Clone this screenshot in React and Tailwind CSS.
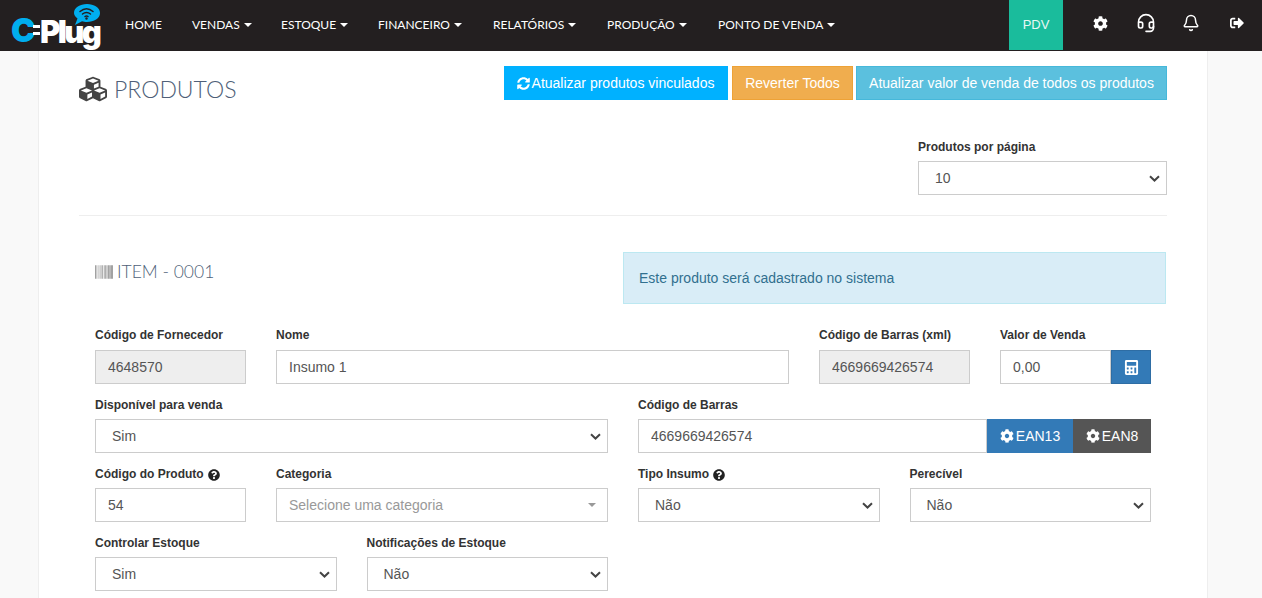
import React from "react";
import { FaCog, FaCubes, FaBarcode, FaSyncAlt, FaCalculator, FaQuestionCircle, FaSignOutAlt } from "react-icons/fa";
import { Bell, Headset } from "lucide-react";

const navItems = [
  ["HOME", false, "w-[67px]"],
  ["VENDAS", true, "w-[89px]"],
  ["ESTOQUE", true, "w-[97px]"],
  ["FINANCEIRO", true, "w-[115px]"],
  ["RELATÓRIOS", true, "w-[114px]"],
  ["PRODUÇÃO", true, "w-[111px]"],
  ["PONTO DE VENDA", true, "w-[130px]"],
];

function Label({ children, help, tall }) {
  return (
    <div className={`h-[15px] ${tall ? "mb-[7px]" : "mb-[6px]"} flex items-center gap-[4px] text-[12px] font-bold leading-[15px] text-[#333]`}>
      <span>{children}</span>
      {help && <FaQuestionCircle className="text-[12px] text-[#222]" />}
    </div>
  );
}

function Input({ value, disabled, className = "" }) {
  return (
    <input
      readOnly
      value={value}
      className={`block w-full h-[34px] px-3 border border-[#ccc] text-[14px] outline-none ${
        disabled ? "bg-[#eee] text-[#555]" : "bg-white text-[#555]"
      } ${className}`}
    />
  );
}

function Select({ value }) {
  return (
    <div className="relative">
      <select
        defaultValue={value}
        className="appearance-none block w-full h-[34px] pl-4 pr-6 border border-[#ccc] bg-white text-[14px] text-[#555] outline-none"
      >
        <option>{value}</option>
      </select>
      <svg className="absolute right-[7px] top-[14px] pointer-events-none" width="11" height="7" viewBox="0 0 11 7">
        <path d="M1 1.200l4.500 4.300 4.500-4.300" fill="none" stroke="#444" strokeWidth="2" />
      </svg>
    </div>
  );
}

function Caret({ color = "currentColor" }) {
  return (
    <svg width="8" height="4" viewBox="0 0 8 4" className="shrink-0">
      <path d="M0 0h8L4 4z" fill={color} />
    </svg>
  );
}

function Logo() {
  return (
    <div className="relative w-[100px] h-[50px] ml-[11px] shrink-0">
      <span className="absolute left-0 top-[14px] text-[33px] leading-[33px] font-black text-[#00aeef] font-['Inter',sans-serif]">
        C
      </span>
      <span className="absolute left-[22px] top-[25px] w-[7px] h-[3px] bg-white" />
      <span className="absolute left-[22px] top-[32px] w-[7px] h-[3px] bg-white" />
      <span className="absolute left-[29px] top-[16px] text-[31px] leading-[31px] font-black text-white font-['Inter',sans-serif] tracking-[-2.600px]">
        Plug
      </span>
      <svg className="absolute left-[61px] top-[3px]" width="29" height="23" viewBox="0 0 29 23">
        <path d="M15 1c7 0 13 3.600 13 9s-6 9-13 9c-2 0-3.500-.3-5-.8L3 22l2.500-6.500C3.500 14 2 12.300 2 10 2 4.600 8 1 15 1z" fill="#00aeef" />
        <path d="M8 8.500c4-3.500 9-3.500 13 0M10.500 11c2.500-2 5.500-2 8 0M13 13.500c1-.8 2-.8 3 0" fill="none" stroke="#231f20" strokeWidth="1.500" strokeLinecap="round" />
        <circle cx="14.500" cy="15.500" r="1.200" fill="#231f20" />
      </svg>
    </div>
  );
}

function Nav() {
  return (
    <nav className="flex h-[51px] bg-[#231f20] text-white shrink-0">
      <Logo />
      <div className="flex items-center h-[50px] ml-[14px] font-['Lato',sans-serif] text-[12px]">
        {navItems.map(([label, caret, w]) => (
          <div key={label} className={`flex items-center gap-[4px] ${w} whitespace-nowrap`}>
            <span>{label}</span>
            {caret && <Caret />}
          </div>
        ))}
      </div>
      <div className="ml-auto flex items-start">
        <div className="w-[54px] h-[50px] bg-[#1abc9c] flex items-center justify-center text-[13px] text-[#e8f8f5]">
          PDV
        </div>
        <div className="flex items-center h-[46px] w-[199px] pl-[15px]">
          <div className="w-[45px] flex justify-center"><FaCog className="text-[15px]" /></div>
          <div className="w-[45px] flex justify-center"><Headset size={20} strokeWidth={2} /></div>
          <div className="w-[46px] flex justify-center"><Bell size={18} strokeWidth={2} /></div>
          <div className="w-[45px] flex justify-center"><FaSignOutAlt className="text-[14px]" /></div>
        </div>
      </div>
    </nav>
  );
}

export default function App() {
  return (
    <div className="h-screen overflow-hidden flex flex-col bg-[#f9f9f9] font-['Liberation_Sans',Arial,sans-serif]">
      <Nav />
      <main className="ml-[38px] mr-[54px] flex-1 bg-white border-x border-[#eee] px-[40px]">
        <header className="flex items-start justify-between pt-[15px]">
          <h1 className="flex items-center gap-[7px] h-[46px] font-['Lato',sans-serif] font-light text-[23px] text-[#4f5f78]">
            <FaCubes className="text-[28px] text-[#444]" />
            <span>PRODUTOS</span>
          </h1>
          <div className="flex text-[14px] text-white">
            <div className="h-[34px] w-[224px] mr-[4px] pr-[1px] bg-[#00b1ff] flex items-center justify-center gap-[2px]">
              <FaSyncAlt className="text-[13px]" /> Atualizar produtos vinculados
            </div>
            <div className="h-[34px] w-[121px] mr-[3px] bg-[#f0ad4e] border border-[#eea236] flex items-center justify-center">
              Reverter Todos
            </div>
            <div className="h-[34px] w-[311px] bg-[#5bc0de] border border-[#46b8da] flex items-center justify-center">
              Atualizar valor de venda de todos os produtos
            </div>
          </div>
        </header>

        <div className="flex justify-end mt-[28px] pb-[20px] border-b border-[#eee]">
          <div className="w-[249px]">
            <Label>Produtos por página</Label>
            <Select value="10" />
          </div>
        </div>

        <section className="px-[16px] pt-[36px]">
          <div className="flex justify-between h-[76px]">
            <div className="flex items-center gap-[4px] h-[40px] font-['Lato',sans-serif] font-light text-[17.500px] text-[#4f5f78]">
              <FaBarcode className="text-[18px] text-[#777]" />
              <span>ITEM - 0001</span>
            </div>
            <div className="w-[543px] -mr-[15px] h-[52px] bg-[#d9edf7] border border-[#bce8f1] text-[#31708f] text-[14px] flex items-center px-[15px]">
              Este produto será cadastrado no sistema
            </div>
          </div>

          <div className="grid grid-cols-12 gap-x-[30px] gap-y-[14px]">
            <div className="col-span-2">
              <Label tall>Código de Fornecedor</Label>
              <Input value="4648570" disabled />
            </div>
            <div className="col-span-6">
              <Label tall>Nome</Label>
              <Input value="Insumo 1" />
            </div>
            <div className="col-span-2">
              <Label tall>Código de Barras (xml)</Label>
              <Input value="4669669426574" disabled />
            </div>
            <div className="col-span-2">
              <Label tall>Valor de Venda</Label>
              <div className="flex">
                <Input value="0,00" className="min-w-0" />
                <div className="w-[40px] h-[34px] shrink-0 bg-[#337ab7] border border-[#2e6da4] flex items-center justify-center text-white">
                  <FaCalculator className="text-[15px]" />
                </div>
              </div>
            </div>

            <div className="col-span-6">
              <Label>Disponível para venda</Label>
              <Select value="Sim" />
            </div>
            <div className="col-span-6">
              <Label>Código de Barras</Label>
              <div className="flex">
                <Input value="4669669426574" className="min-w-0" />
                <div className="w-[86px] h-[34px] shrink-0 bg-[#337ab7] flex items-center justify-center gap-[2px] text-white text-[14px]">
                  <FaCog className="text-[14px]" /> EAN13
                </div>
                <div className="w-[78px] h-[34px] shrink-0 bg-[#555] flex items-center justify-center gap-[2px] text-white text-[14px]">
                  <FaCog className="text-[14px]" /> EAN8
                </div>
              </div>
            </div>

            <div className="col-span-2">
              <Label help>Código do Produto</Label>
              <Input value="54" />
            </div>
            <div className="col-span-4">
              <Label>Categoria</Label>
              <div className="h-[34px] border border-[#ccc] bg-white flex items-center justify-between pl-3 pr-[11px] text-[14px] text-[#999]">
                <span>Selecione uma categoria</span>
                <Caret color="#999" />
              </div>
            </div>
            <div className="col-span-3">
              <Label help>Tipo Insumo</Label>
              <Select value="Não" />
            </div>
            <div className="col-span-3">
              <Label>Perecível</Label>
              <Select value="Não" />
            </div>

            <div className="col-span-3">
              <Label>Controlar Estoque</Label>
              <Select value="Sim" />
            </div>
            <div className="col-span-3">
              <Label>Notificações de Estoque</Label>
              <Select value="Não" />
            </div>
          </div>
        </section>
      </main>
    </div>
  );
}
